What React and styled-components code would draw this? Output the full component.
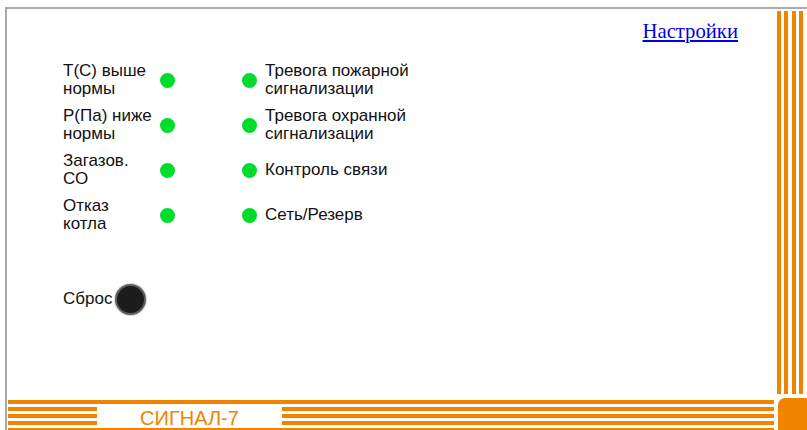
import React from 'react';
import styled, { createGlobalStyle } from 'styled-components';

const ORANGE = '#f08400';

const GlobalStyle = createGlobalStyle`
  html, body {
    margin: 0;
    padding: 0;
    overflow: hidden;
    background: #fff;
  }
`;

const Frame = styled.div`
  margin: 7px 0 0 5px;
  width: 830px;
  height: 440px;
  border-top: 2px solid #ababab;
  border-left: 2px solid #ababab;
  display: grid;
  grid-template-columns: 767px 1fr;
  grid-template-rows: 389px 1fr;
`;

const Panel = styled.div`
  padding: 11px 36px 0 56px;
  display: flex;
  flex-direction: column;
  font-family: "Liberation Sans", Arial, sans-serif;
  font-size: 17px;
  line-height: 18px;
  color: #111;
`;

const TopBar = styled.div`
  display: flex;
  justify-content: flex-end;
`;

const SettingsLink = styled.a`
  font-family: "Liberation Serif", "Times New Roman", serif;
  font-size: 20.7px;
  line-height: 23px;
  color: #0000ee;
  text-decoration: underline;
  cursor: pointer;
`;

const Indicators = styled.div`
  margin-top: 14.5px;
  display: grid;
  grid-template-columns: 97px 15px 67px 15px auto;
  grid-auto-rows: 45px;
  align-items: center;
`;

const Label = styled.div`
  padding-left: ${({ $indent }) => ($indent ? '8px' : '0')};
`;

const Lamp = styled.span`
  width: 15px;
  height: 15px;
  border-radius: 50%;
  background: ${({ $on }) => ($on ? '#00dc2c' : '#9a9a9a')};
`;

const ResetRow = styled.div`
  margin-top: 46px;
  display: flex;
  align-items: center;
  gap: 3px;
`;

const ResetButton = styled.button`
  width: 31px;
  height: 31px;
  padding: 0;
  border-radius: 50%;
  border: 2px solid #5e5e5e;
  background: #1c1c1c;
  box-shadow: 0 0 1px 1px #d4d4d4;
  cursor: pointer;
`;

const SideStripes = styled.div`
  display: flex;
  gap: 3.33px;
  padding: 2px 0 4px 3px;
`;

const VStripe = styled.span`
  width: 4px;
  background: ${ORANGE};
`;

const BottomBand = styled.div`
  padding: 1.5px 0 0 1px;
  display: flex;
  flex-direction: column;
  gap: 3px;
`;

const HStripe = styled.span`
  display: block;
  height: 4px;
  background: ${ORANGE};
`;

const StripeGroup = styled.div`
  display: flex;
  flex-direction: column;
  gap: 3px;
  ${({ $width }) => ($width ? `width: ${$width}px;` : 'flex: 1;')}
`;

const BandMiddle = styled.div`
  display: flex;
  align-items: center;
`;

const Brand = styled.div`
  width: 185px;
  text-align: center;
  font-family: "Liberation Sans", Arial, sans-serif;
  font-size: 20px;
  line-height: 18px;
  color: ${ORANGE};
  position: relative;
  top: 2px;
`;

const Corner = styled.div`
  margin-left: 4px;
  background: ${ORANGE};
  border-top-left-radius: 7px;
`;

const leftSignals = [
  ['Т(С) выше', 'нормы'],
  ['Р(Па) ниже', 'нормы'],
  ['Загазов.', 'СО'],
  ['Отказ', 'котла'],
];

const rightSignals = [
  ['Тревога пожарной', 'сигнализации'],
  ['Тревога охранной', 'сигнализации'],
  ['Контроль связи'],
  ['Сеть/Резерв'],
];

const Lines = ({ lines }) =>
  lines.map((line, i) => (
    <React.Fragment key={i}>
      {i > 0 && <br />}
      {line}
    </React.Fragment>
  ));

const Stripes = ({ count, ...props }) => (
  <StripeGroup {...props}>
    {Array.from({ length: count }, (_, i) => <HStripe key={i} />)}
  </StripeGroup>
);

const App = () => (
  <>
    <GlobalStyle />
    <Frame>
      <Panel>
        <TopBar>
          <SettingsLink href="#settings">Настройки</SettingsLink>
        </TopBar>
        <Indicators>
          {leftSignals.map((left, i) => (
            <React.Fragment key={i}>
              <Label><Lines lines={left} /></Label>
              <Lamp $on />
              <span />
              <Lamp $on />
              <Label $indent><Lines lines={rightSignals[i]} /></Label>
            </React.Fragment>
          ))}
        </Indicators>
        <ResetRow>
          <span>Сброс</span>
          <ResetButton aria-label="Сброс" />
        </ResetRow>
      </Panel>

      <SideStripes>
        {[0, 1, 2, 3].map((i) => <VStripe key={i} />)}
      </SideStripes>

      <BottomBand>
        <HStripe />
        <BandMiddle>
          <Stripes count={3} $width={89} />
          <Brand>СИГНАЛ-7</Brand>
          <Stripes count={3} />
        </BandMiddle>
        <HStripe />
      </BottomBand>

      <Corner />
    </Frame>
  </>
);

export default App;
